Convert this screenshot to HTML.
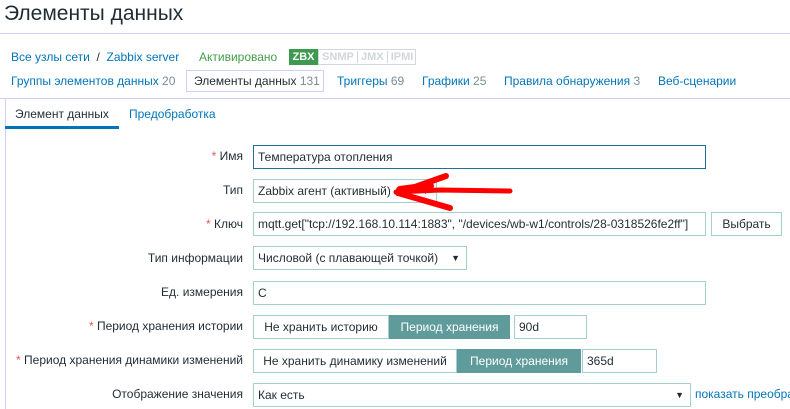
<!DOCTYPE html>
<html><head><meta charset="utf-8"><style>
*{box-sizing:border-box;margin:0;padding:0}
body{width:790px;height:409px;overflow:hidden;background:#fff;font-family:"Liberation Sans",Arial,sans-serif;font-size:12px;color:#1f2c33;position:relative}
.a{position:absolute;white-space:nowrap}
a,.l{color:#0275b8;text-decoration:none}
.g{color:#768d99}
.in{position:absolute;border:1px solid #a3cfd0;height:24px;line-height:22px;padding-left:4px;background:#fff;white-space:nowrap;overflow:hidden}
.lab{position:absolute;right:547px;white-space:nowrap;text-align:right}
.r{color:#e45959}
.btn{position:absolute;height:24px;line-height:22px;text-align:center;border:1px solid #a3cfd0;white-space:nowrap}
.on{background:#5f9b9b;color:#fff;border-color:#5f9b9b}
.ar{position:absolute;right:6px;top:0;font-size:9px}
</style></head><body>
<div class="a" style="left:4px;top:1px;font-size:21px;line-height:26px;color:#1f2c33">Элементы данных</div>
<div class="a" style="left:0;top:33px;width:790px;height:1px;background:#cfcff7"></div>
<div class="a" style="left:11px;top:49px;line-height:16px"><a>Все узлы сети</a>&nbsp;&nbsp;/&nbsp;&nbsp;<a>Zabbix server</a></div>
<div class="a" style="left:199px;top:49px;line-height:16px;color:#429e47">Активировано</div>
<div class="a" style="left:289px;top:49px;height:16px;width:29px;background:#3d9a50;color:#fff;font-size:11px;line-height:16px;text-align:center;font-weight:bold">ZBX</div>
<div class="a" style="left:318px;top:49px;height:16px;width:98px;border:1px solid #d0d8dc;font-size:11px;line-height:14px;color:#cfd7db;font-weight:bold">&nbsp;SNMP&nbsp;<span style="border-left:1px solid #d0d8dc">&nbsp;JMX&nbsp;</span><span style="border-left:1px solid #d0d8dc">&nbsp;IPMI</span></div>
<div class="a" style="left:11px;top:73px;line-height:16px"><a>Группы элементов данных</a> <span class="g">20</span></div>
<div class="a" style="left:186px;top:70px;height:22px;width:138px;border:1px solid #cfcff7;line-height:20px;padding-left:7px"><a style="color:#1f2c33">Элементы данных</a> <span class="g">131</span></div>
<div class="a" style="left:337px;top:73px;line-height:16px"><a>Триггеры</a> <span class="g">69</span></div>
<div class="a" style="left:422px;top:73px;line-height:16px"><a>Графики</a> <span class="g">25</span></div>
<div class="a" style="left:504px;top:73px;line-height:16px"><a>Правила обнаружения</a> <span class="g">3</span></div>
<div class="a" style="left:658px;top:73px;line-height:16px"><a>Веб-сценарии</a></div>
<div class="a" style="left:0;top:98px;width:790px;height:1px;background:#cfcff7"></div>
<div class="a" style="left:5px;top:98px;width:1px;height:311px;background:#cfcff7"></div>
<div class="a" style="left:15px;top:106px;line-height:16px">Элемент данных</div>
<div class="a" style="left:129px;top:106px;line-height:16px"><a>Предобработка</a></div>
<div class="a" style="left:5px;top:126px;width:114px;height:3px;background:#0275b8"></div>

<div class="lab" style="top:149px"><span class="r">*</span> Имя</div>
<div class="in" style="left:253px;top:145px;width:453px;border-color:#1f6f9f">Температура отопления</div>
<div class="lab" style="top:183px">Тип</div>
<div class="in" style="left:253px;top:179px;width:184px">Zabbix агент (активный)<span class="ar">▼</span></div>
<div class="lab" style="top:217px"><span class="r">*</span> Ключ</div>
<div class="in" style="left:253px;top:212px;width:453px">mqtt.get["tcp://192.168.10.114:1883", "/devices/wb-w1/controls/28-0318526fe2ff"]</div>
<div class="btn" style="left:711px;top:212px;width:71px;border-color:#a3cfd0">Выбрать</div>
<div class="lab" style="top:251px">Тип информации</div>
<div class="in" style="left:253px;top:246px;width:214px">Числовой (с плавающей точкой)<span class="ar">▼</span></div>
<div class="lab" style="top:285px">Ед. измерения</div>
<div class="in" style="left:253px;top:281px;width:453px">C</div>
<div class="lab" style="top:319px"><span class="r">*</span> Период хранения истории</div>
<div class="btn" style="left:253px;top:315px;width:136px">Не хранить историю</div>
<div class="btn on" style="left:389px;top:315px;width:121px">Период хранения</div>
<div class="in" style="left:514px;top:315px;width:73px">90d</div>
<div class="lab" style="top:353px"><span class="r">*</span> Период хранения динамики изменений</div>
<div class="btn" style="left:253px;top:349px;width:204px">Не хранить динамику изменений</div>
<div class="btn on" style="left:457px;top:349px;width:124px">Период хранения</div>
<div class="in" style="left:582px;top:349px;width:75px">365d</div>
<div class="lab" style="top:387px">Отображение значения</div>
<div class="in" style="left:253px;top:383px;width:438px">Как есть<span class="ar">▼</span></div>
<div class="a l" style="left:695px;top:387px;width:95px;overflow:hidden">показать преобразования</div>

<svg class="a" style="left:0;top:0" width="790" height="409">
<g stroke="#ff0000" stroke-linecap="round" fill="none">
<path d="M398 193 L446 176" stroke-width="6"/>
<path d="M398 193 L450 208" stroke-width="6"/>
<path d="M396 192 L440 190 L510 191" stroke-width="5"/>
<path d="M400 190 L430 186" stroke-width="8"/>
</g></svg>
</body></html>
